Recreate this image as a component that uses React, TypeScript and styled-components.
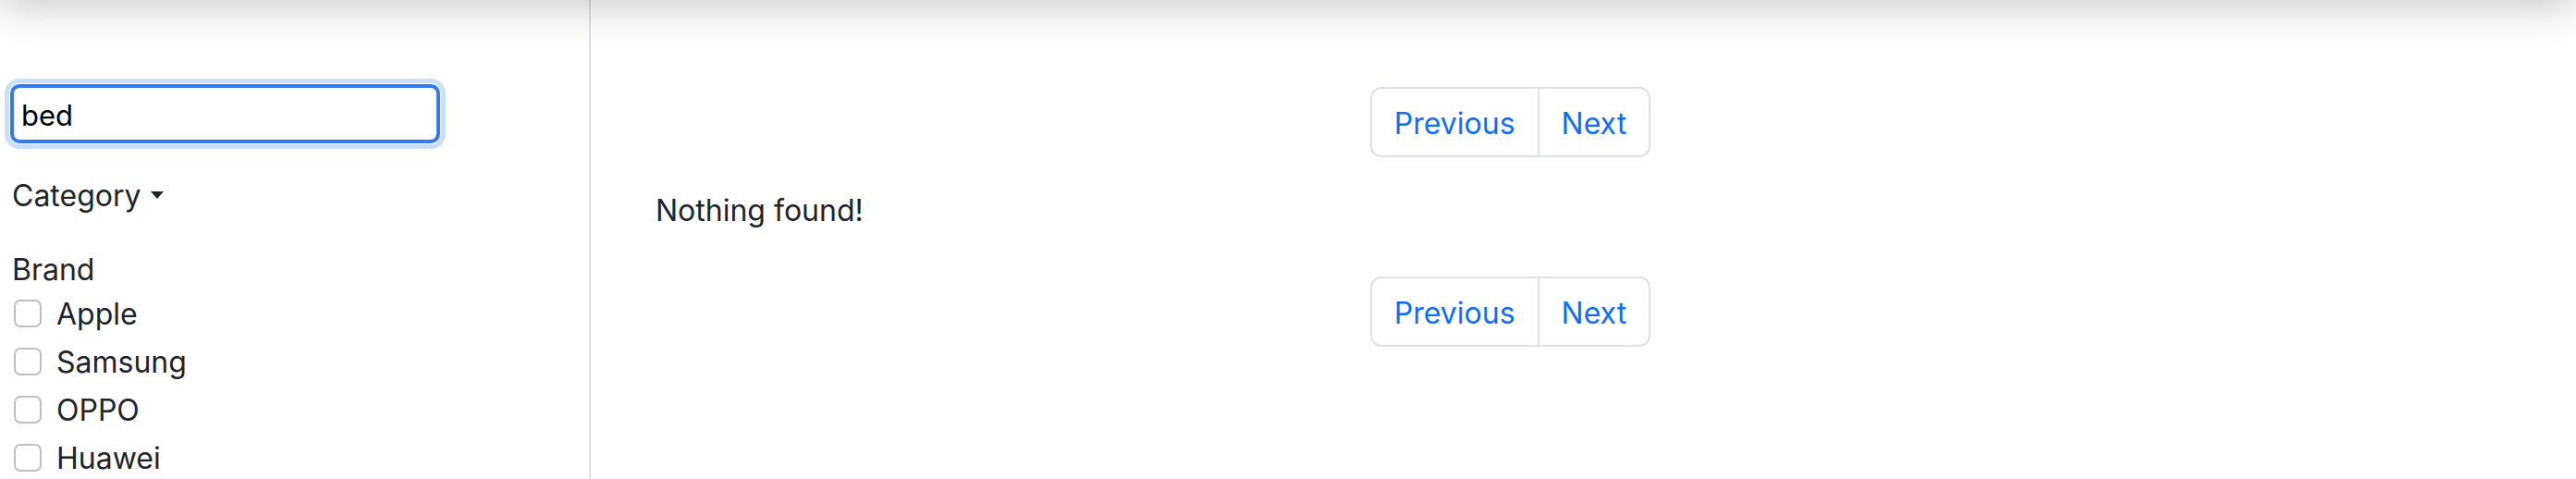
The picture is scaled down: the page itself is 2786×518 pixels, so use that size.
import React, { useState } from 'react';
import styled, { createGlobalStyle } from 'styled-components';

const GlobalStyle = createGlobalStyle`
  * {
    box-sizing: border-box;
  }

  body {
    margin: 0;
    background: white;
    color: #212529;
    font-family: Inter, 'Noto Sans', sans-serif;
    font-size: 32px;
    line-height: 48px;
  }
`;

// navbar sits just above the visible area, only its shadow shows
const TopShadow = styled.div`
  position: fixed;
  top: -40px;
  left: 0;
  right: 0;
  height: 40px;
  background: #fff;
  box-shadow: 0 0 50px rgba(0, 0, 0, 0.3);
  z-index: 10;
`;

const Page = styled.div`
  display: flex;
  min-height: 100vh;
`;

const Sidebar = styled.aside`
  width: 639px;
  flex-shrink: 0;
  padding: 91px 0 0 11px;
  border-right: 2px solid #dee2e6;
  display: flex;
  flex-direction: column;
`;

const SearchInput = styled.input`
  width: 465px;
  height: 64px;
  padding: 2px 8px 0;
  border: 4px solid #3478f6;
  border-radius: 10px;
  outline: none;
  box-shadow: 0 0 0 1px #fff, 0 0 0 6px rgba(13, 110, 253, 0.22);
  color: #000;
  font-family: Inter, 'Noto Sans', sans-serif;
  font-size: 31px;
`;

const CategoryToggle = styled.div`
  margin-top: 32px;
  padding: 2px 0 0 2px;
  height: 48px;
  display: flex;
  align-items: center;
  cursor: pointer;
`;

const Caret = styled.span`
  margin: -2px 0 0 10px;
  width: 0;
  height: 0;
  border-top: 8px solid #212529;
  border-left: 7.5px solid transparent;
  border-right: 7.5px solid transparent;
`;

const SectionTitle = styled.div`
  margin-top: 31px;
  padding: 2px 0 0 2px;
  height: 48px;
`;

const CheckList = styled.div`
  display: flex;
  flex-direction: column;
  gap: 4px;
`;

const CheckRow = styled.label`
  display: flex;
  align-items: center;
  height: 48px;
  cursor: pointer;
`;

const CheckBox = styled.span<{ checked: boolean }>`
  width: 30px;
  height: 30px;
  margin: 2px 0 0 4px;
  border: 2px solid rgba(0, 0, 0, 0.25);
  border-radius: 7px;
  background: ${({ checked }) => (checked ? '#0d6efd' : 'white')};
`;

const CheckLabel = styled.span`
  margin: 3px 0 0 16px;
`;

const Main = styled.main`
  flex: 1;
  padding: 94px 228px 0 70px;
  display: flex;
  flex-direction: column;
`;

const Pagination = styled.nav<{ gapTop: number }>`
  margin-top: ${({ gapTop }) => gapTop}px;
  display: flex;
  justify-content: center;
`;

const PageButton = styled.a`
  padding: 14px 24px 10px;
  border: 2px solid #dee2e6;
  color: #0d6efd;
  text-decoration: none;
  cursor: pointer;

  &:first-child {
    border-radius: 12px 0 0 12px;
  }

  &:last-child {
    margin-left: -2px;
    border-radius: 0 12px 12px 0;
  }
`;

const Message = styled.p`
  margin: 32px 0 0;
  padding-top: 2px;
  height: 48px;
`;

const brands = ['Apple', 'Samsung', 'OPPO', 'Huawei'];

const Pager = ({ gapTop }: { gapTop: number }) => (
  <Pagination gapTop={gapTop}>
    <PageButton>Previous</PageButton>
    <PageButton>Next</PageButton>
  </Pagination>
);

const App = () => {
  const [query, setQuery] = useState<string>('bed');
  const [checked, setChecked] = useState<string[]>([]);

  const toggleBrand = (brand: string) => {
    setChecked((prev) =>
      prev.includes(brand) ? prev.filter((b) => b !== brand) : [...prev, brand]
    );
  };

  return (
    <>
      <GlobalStyle />
      <TopShadow />
      <Page>
        <Sidebar>
          <SearchInput value={query} onChange={(e) => setQuery(e.target.value)} />
          <CategoryToggle>
            Category
            <Caret />
          </CategoryToggle>
          <SectionTitle>Brand</SectionTitle>
          <CheckList>
            {brands.map((brand) => (
              <CheckRow key={brand} onClick={() => toggleBrand(brand)}>
                <CheckBox checked={checked.includes(brand)} />
                <CheckLabel>{brand}</CheckLabel>
              </CheckRow>
            ))}
          </CheckList>
        </Sidebar>
        <Main>
          <Pager gapTop={0} />
          <Message>Nothing found!</Message>
          <Pager gapTop={49} />
        </Main>
      </Page>
    </>
  );
};

export default App;
